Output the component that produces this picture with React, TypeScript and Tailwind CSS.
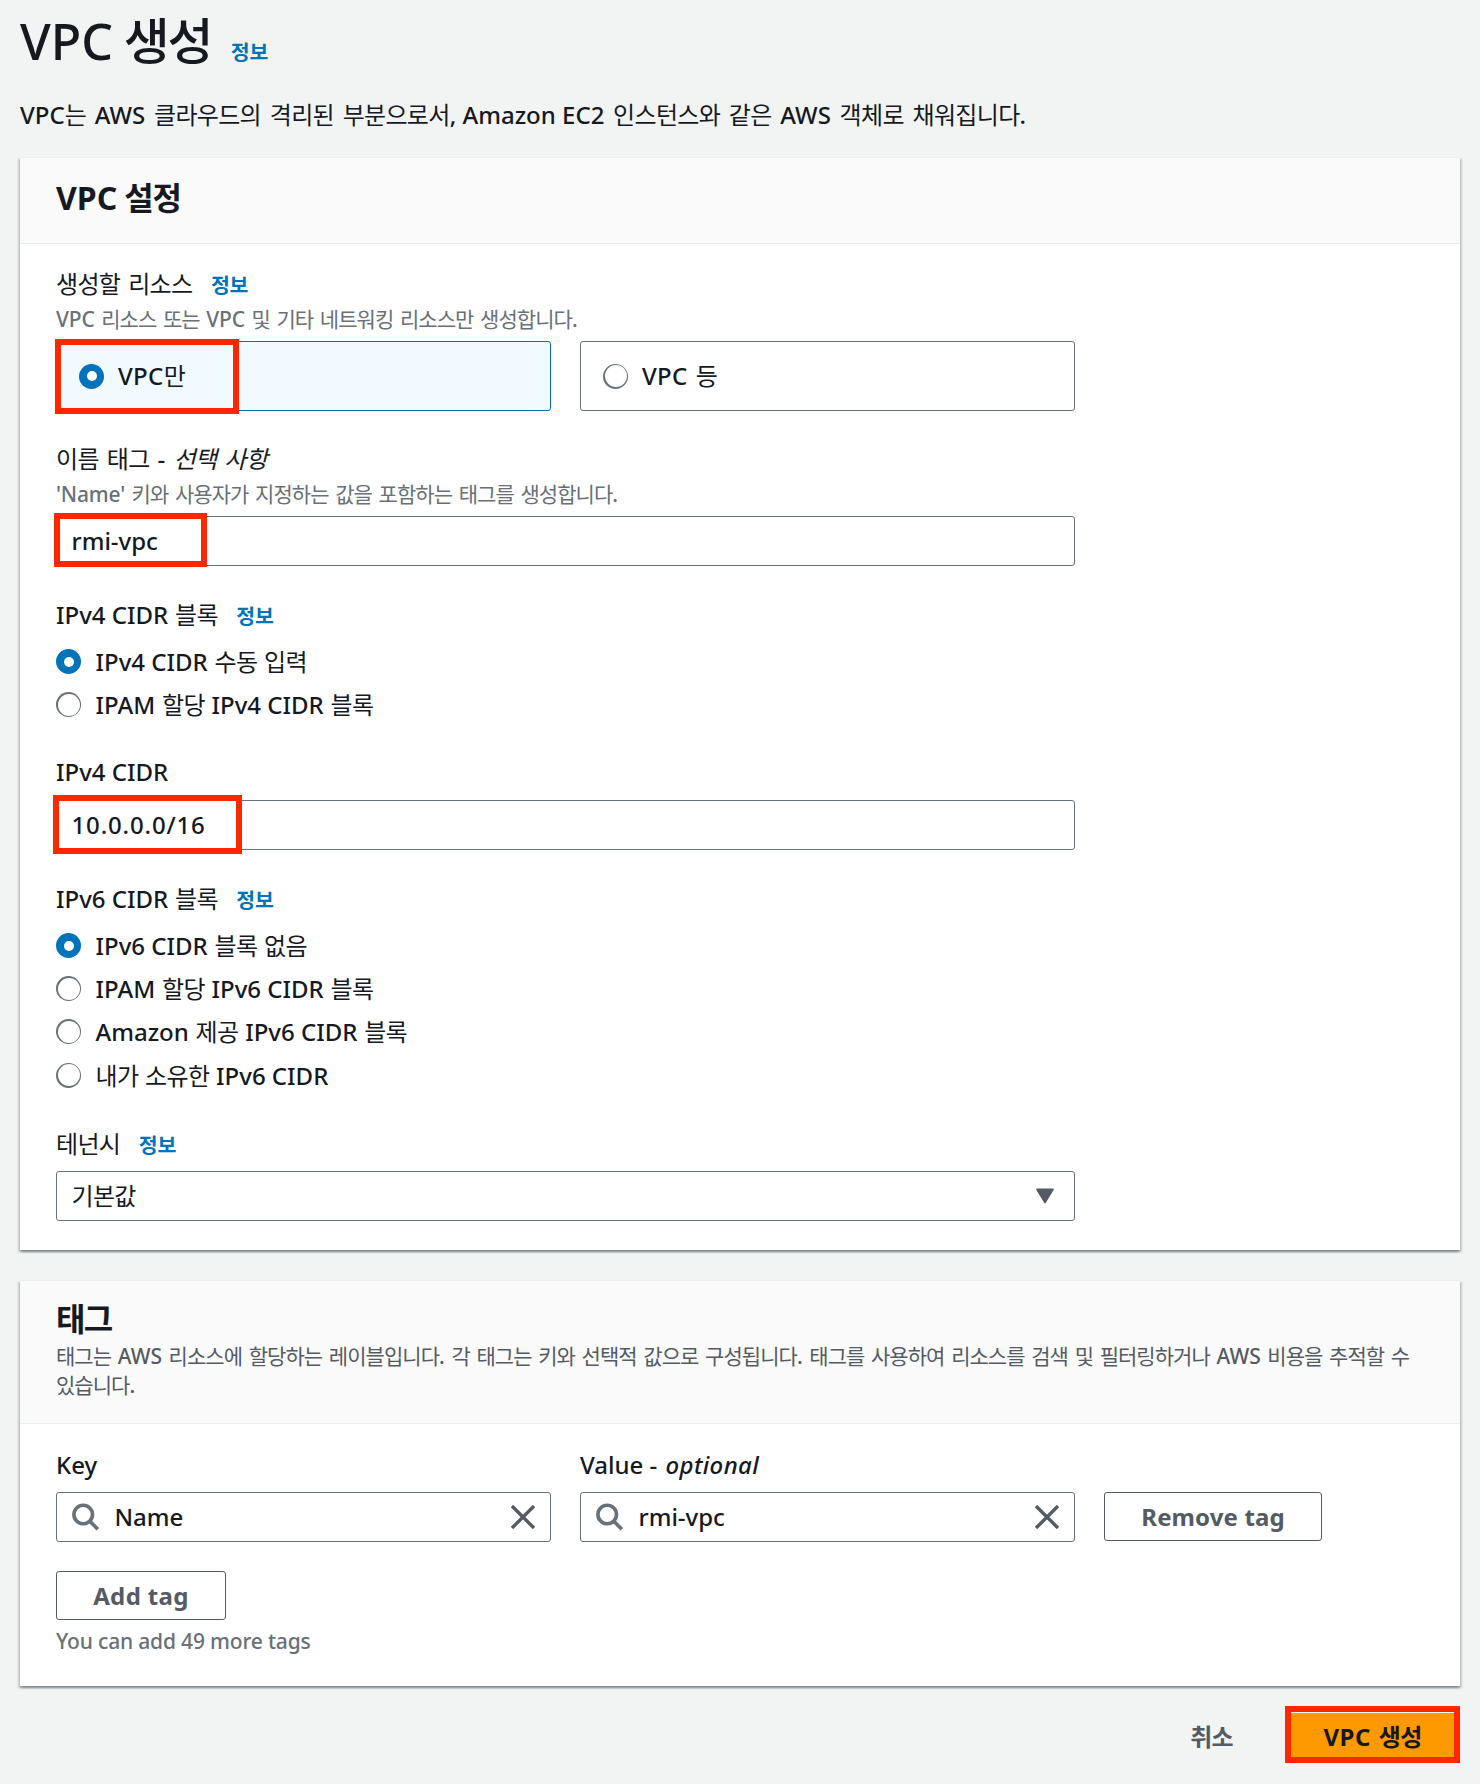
import React from "react";

const HANGUL = /(\s?[\u3130-\u318f\uac00-\ud7a3]+\s?)/;

const BODY = "tracking-[-0.028em] [word-spacing:0.1em]";
const TIGHT = "tracking-[-0.028em] [word-spacing:0.05em]";
const WIDE = "tracking-[-0.028em] [word-spacing:0.13em]";
const SMALL = "tracking-[-0.045em] [word-spacing:0.1em]";
const HEADING = "tracking-[-0.04em]";

/* Mixed-script text: Hangul runs and Latin runs get their own tracking and weight. */
function Txt({ children, ko = BODY, latin = "font-medium" }: { children: string; ko?: string; latin?: string }) {
  return (
    <span className="whitespace-pre">
      {children.split(HANGUL).map((part, i) =>
        part ? (
          <span key={i} className={HANGUL.test(part) ? ko : latin}>
            {part}
          </span>
        ) : null,
      )}
    </span>
  );
}

function Info({ className = "ml-[18.5px]" }: { className?: string }) {
  return (
    <a className={`text-[20.5px] font-bold text-[#0073bb] ${className}`}>
      <Txt ko="tracking-[-0.01em]">정보</Txt>
    </a>
  );
}

function Label({ text, em, info, ko, className = "" }: { text: string; em?: string; info?: boolean; ko?: string; className?: string }) {
  return (
    <div className={`h-[30px] text-[24px] leading-[30px] ${className}`}>
      <Txt ko={ko}>{text}</Txt>
      {em && (
        <i className="ml-[2px]">
          <Txt latin="font-medium tracking-[0.015em]">{em}</Txt>
        </i>
      )}
      {info && <Info />}
    </div>
  );
}

function Hint({ children, className = "" }: { children: string; className?: string }) {
  return (
    <div className={`h-7 text-[21px] leading-7 text-[#687078] ${className}`}>
      <Txt ko={SMALL} latin="font-medium tracking-[-0.008em]">{children}</Txt>
    </div>
  );
}

function Radio({ on }: { on?: boolean }) {
  return on ? (
    <span className="flex h-[25px] w-[25px] shrink-0 items-center justify-center rounded-full bg-[#0073bb]">
      <span className="h-[10px] w-[10px] rounded-full bg-white" />
    </span>
  ) : (
    <span className="flex h-[25px] w-[25px] shrink-0 items-center justify-center rounded-full bg-[#687078]">
      <span className="h-[22px] w-[22px] rounded-full bg-white" />
    </span>
  );
}

function RadioRow({ text, on }: { text: string; on?: boolean }) {
  return (
    <div className="flex h-[25px] items-center gap-[14.5px] text-[24px] leading-[25px]">
      <Radio on={on} />
      <Txt ko={TIGHT}>{text}</Txt>
    </div>
  );
}

function Tile({ text, on, children }: { text: string; on?: boolean; children?: React.ReactNode }) {
  return (
    <div
      className={`relative flex h-[70px] w-[495px] items-center gap-[14px] rounded-[3px] border pl-[22px] text-[24px] leading-[30px] ${
        on ? "border-[#0073bb] bg-[#f1faff]" : "border-[#687078] bg-white"
      }`}
    >
      <Radio on={on} />
      <Txt latin="font-medium tracking-[0.015em]">{text}</Txt>
      {children}
    </div>
  );
}

function Mark({ className }: { className: string }) {
  return <span className={`pointer-events-none absolute border-[6px] border-[#ff2600] ${className}`} />;
}

function Field({ children, className = "" }: { children: React.ReactNode; className?: string }) {
  return (
    <div className={`relative flex h-[50px] items-center rounded-[3px] border border-[#687078] bg-white pl-[14.5px] text-[24px] leading-[30px] ${className}`}>
      {children}
    </div>
  );
}

function SearchField({ value }: { value: string }) {
  return (
    <Field className="w-[495px]">
      <svg className="h-[28px] w-[28px]" viewBox="0 0 28 28" fill="none" stroke="#687078" strokeWidth="3.6">
        <circle cx="11.2" cy="11.5" r="9.3" />
        <path d="M17.8 18.2L25.8 26.2" />
      </svg>
      <span className="ml-[15px] grow">
        <Txt>{value}</Txt>
      </span>
      <svg className="mr-[15.5px] h-[24px] w-[24px]" viewBox="0 0 24 24" fill="none" stroke="#545b64" strokeWidth="3.4">
        <path d="M1 1L23 23M23 1L1 23" />
      </svg>
    </Field>
  );
}

const CARD =
  "border-t border-[#eaeded] bg-white shadow-[0_2px_2px_0_rgba(0,28,36,0.3),2px_2px_2px_0_rgba(0,28,36,0.15),-2px_2px_2px_0_rgba(0,28,36,0.15)]";
const BUTTON =
  "h-[49px] rounded-[3px] border border-[#545b64] text-[24px] font-bold leading-[47px] text-[#545b64]";

export default function App() {
  return (
    <div className="h-[1784px] w-[1480px] overflow-hidden bg-[#f2f4f3] pl-5 font-['Noto_Sans','Noto_Sans_CJK_KR',sans-serif] text-[#16191f]">
      <h1 className="h-[82px] text-[50px] font-medium leading-[82px]">
        <Txt ko="tracking-[-0.045em]">VPC 생성</Txt>
        <Info className="ml-[19.5px]" />
      </h1>
      <p className="mt-[17px] h-[32px] text-[24px] leading-[32px]">
        <Txt ko={WIDE}>VPC는 AWS 클라우드의 격리된 부분으로서, Amazon EC2 인스턴스와 같은 AWS 객체로 채워집니다.</Txt>
      </p>

      <section className={`mt-[26px] h-[1093px] w-[1440px] ${CARD}`}>
        <header className="h-[86px] border-b border-[#eaeded] bg-[#fafafa] pl-9">
          <h2 className="pt-[19px] text-[32px] font-bold leading-[42px]">
            <Txt ko={HEADING} latin="font-bold">VPC 설정</Txt>
          </h2>
        </header>
        <div className="w-[1055px] pl-9 pt-[25px]">
          <Label text="생성할 리소스" info />
          <Hint className="mt-[6px]">VPC 리소스 또는 VPC 및 기타 네트워킹 리소스만 생성합니다.</Hint>
          <div className="mt-2 flex gap-[29px]">
            <Tile text="VPC만" on>
              <Mark className="-left-[2px] -top-[3px] h-[75px] w-[184px]" />
            </Tile>
            <Tile text="VPC 등" />
          </div>

          <Label className="mt-[33px]" text="이름 태그 - " em="선택 사항" />
          <Hint className="mt-[6px]">'Name' 키와 사용자가 지정하는 값을 포함하는 태그를 생성합니다.</Hint>
          <Field className="mt-[8px]">
            <Txt>rmi-vpc</Txt>
            <Mark className="-left-[3px] -top-[4px] h-[54px] w-[153px]" />
          </Field>

          <Label className="mt-[34px]" text="IPv4 CIDR 블록" ko={TIGHT} info />
          <div className="mt-[19px] flex flex-col gap-[18px]">
            <RadioRow on text="IPv4 CIDR 수동 입력" />
            <RadioRow text="IPAM 할당 IPv4 CIDR 블록" />
          </div>

          <Label className="mt-10" text="IPv4 CIDR" />
          <Field className="mt-[13px]">
            <Txt latin="font-medium tracking-[0.035em]">10.0.0.0/16</Txt>
            <Mark className="-left-[4px] -top-[6px] h-[59px] w-[189px]" />
          </Field>

          <Label className="mt-[34px]" text="IPv6 CIDR 블록" ko={TIGHT} info />
          <div className="mt-[19px] flex flex-col gap-[18.2px]">
            <RadioRow on text="IPv6 CIDR 블록 없음" />
            <RadioRow text="IPAM 할당 IPv6 CIDR 블록" />
            <RadioRow text="Amazon 제공 IPv6 CIDR 블록" />
            <RadioRow text="내가 소유한 IPv6 CIDR" />
          </div>

          <Label className="mt-[41.4px]" text="테넌시" info />
          <Field className="mt-3 justify-between">
            <Txt>기본값</Txt>
            <svg className="mr-5 h-[16px] w-[18px]" viewBox="0 0 18 16" fill="#545b64" stroke="#545b64" strokeWidth="2" strokeLinejoin="round">
              <path d="M1.2 1.5H16.8L9 14.2Z" />
            </svg>
          </Field>
        </div>
      </section>

      <section className={`mt-[30px] h-[406px] w-[1440px] ${CARD}`}>
        <header className="h-[143px] border-b border-[#eaeded] bg-[#fafafa] pl-9 pt-[18px]">
          <h2 className="text-[32px] font-bold leading-[40px]">
            <Txt ko="tracking-[-0.05em]">태그</Txt>
          </h2>
          <p className="mt-[3px] text-[21px] leading-[29px] text-[#545b64]">
            <Txt ko={SMALL}>태그는 AWS 리소스에 할당하는 레이블입니다. 각 태그는 키와 선택적 값으로 구성됩니다. 태그를 사용하여 리소스를 검색 및 필터링하거나 AWS 비용을 추적할 수</Txt>
            <br />
            <Txt ko={SMALL}>있습니다.</Txt>
          </p>
        </header>
        <div className="pl-9 pt-[26px]">
          <div className="flex gap-[29px]">
            <Label className="w-[495px]" text="Key" />
            <Label text="Value - " em="optional" />
          </div>
          <div className="mt-3 flex gap-[29px]">
            <SearchField value="Name" />
            <SearchField value="rmi-vpc" />
            <button className={`w-[218px] ${BUTTON}`}>
              <Txt latin="font-bold tracking-[0.005em]">Remove tag</Txt>
            </button>
          </div>
          <button className={`mt-[29px] block w-[170px] ${BUTTON}`}>
            <Txt latin="font-bold tracking-[0.015em]">Add tag</Txt>
          </button>
          <Hint className="mt-[7px]">You can add 49 more tags</Hint>
        </div>
      </section>

      <footer className="mt-5 flex w-[1440px] items-center justify-end text-[24px] font-bold">
        <button className="mr-[52px] pt-[4px] text-[#545b64]">
          <Txt>취소</Txt>
        </button>
        <button className="h-[57px] w-[175px] border-[6px] border-[#ff2600] bg-[#ff9900]">
          <span className="block h-[45px] border-t border-white leading-[48px]">
            <Txt latin="font-bold tracking-[0.02em]">VPC 생성</Txt>
          </span>
        </button>
      </footer>
    </div>
  );
}
